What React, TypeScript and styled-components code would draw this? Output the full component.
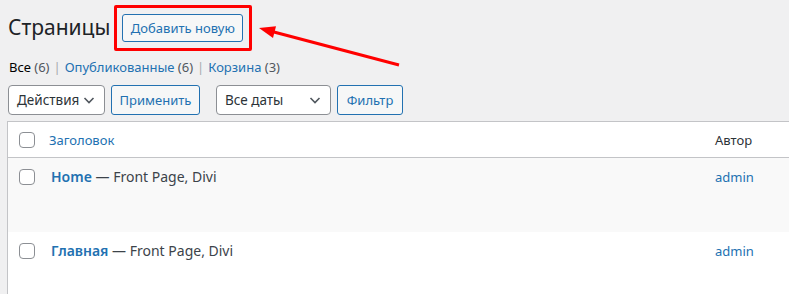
import React from "react";
import styled, { createGlobalStyle } from "styled-components";

const Global = createGlobalStyle`
  html, body { margin: 0; padding: 0; background: #f0f0f1; overflow: hidden; }
  body { font-family: "Noto Sans", "Open Sans", sans-serif; font-size: 13px; color: #1d2327; }
  * { box-sizing: border-box; }
`;

const Page = styled.div`
  position: relative;
  width: 789px;
  height: 294px;
  padding: 5px 0 0 7px;
  overflow: hidden;
`;

const Header = styled.div`
  display: flex;
  align-items: center;
  height: 46px;
`;

const Title = styled.h1`
  margin: 0 0 0 1px;
  font-size: 21px;
  font-weight: 400;
  color: #1d2327;
  line-height: 1.3;
`;

const Highlight = styled.div`
  margin-left: 4px;
  border: 3px solid #f00;
  border-radius: 2px;
  width: 138px;
  height: 46px;
  display: flex;
  align-items: center;
  justify-content: center;
`;

const AddButton = styled.a`
  display: inline-flex;
  align-items: center;
  justify-content: center;
  width: 121px;
  height: 28px;
  border: 1px solid #2271b1;
  border-radius: 3px;
  background: #f6f7f7;
  color: #2271b1;
  font-size: 13px;
  text-decoration: none;
  margin-right: 1px;
`;

const Arrow = styled.svg`
  position: absolute;
  left: 250px;
  top: 15px;
`;

const Filters = styled.ul`
  list-style: none;
  margin: 6px 0 0 2px;
  padding: 0;
  display: flex;
  color: #646970;
  font-size: 13px;
  line-height: 20px;
`;

const FilterItem = styled.li<{ $current?: boolean }>`
  a {
    color: ${(p) => (p.$current ? "#000" : "#2271b1")};
    text-decoration: none;
  }
  .count { color: #50575e; }
`;

const Sep = styled.span`
  margin: 0 4px;
  color: #a7aaad;
`;

const Toolbar = styled.div`
  display: flex;
  align-items: center;
  margin: 8px 0 0 1px;
  height: 30px;
`;

const Group = styled.div<{ $ml?: number }>`
  display: flex;
  gap: 6px;
  margin-left: ${(p) => p.$ml || 0}px;
`;

const Select = styled.div<{ $w: number }>`
  width: ${(p) => p.$w}px;
  height: 30px;
  border: 1px solid #8c8f94;
  border-radius: 4px;
  background: #fff;
  display: flex;
  align-items: center;
  justify-content: space-between;
  padding: 0 8px 0 8px;
  font-size: 13.5px;
  color: #2c3338;
`;

const Button = styled.div<{ $w: number }>`
  width: ${(p) => p.$w}px;
  height: 30px;
  border: 1px solid #2271b1;
  border-radius: 3px;
  background: #f6f7f7;
  color: #2271b1;
  display: flex;
  align-items: center;
  justify-content: center;
  font-size: 13px;
`;

const Table = styled.div`
  margin-top: 6px;
  width: 800px;
  border: 1px solid #c3c4c7;
  border-right: none;
  background: #fff;
`;

const HeadRow = styled.div`
  display: flex;
  align-items: center;
  height: 36px;
  border-bottom: 1px solid #c3c4c7;
`;

const Row = styled.div<{ $alt?: boolean }>`
  display: flex;
  align-items: flex-start;
  height: 74px;
  padding-top: 9px;
  background: ${(p) => (p.$alt ? "#f9f9f9" : "#fff")};
`;

const CheckCell = styled.div<{ $pt?: number }>`
  width: 41px;
  padding-left: 11px;
  padding-top: ${(p) => p.$pt || 0}px;
  display: flex;
`;

const Checkbox = styled.span`
  width: 16px;
  height: 16px;
  border: 1px solid #8c8f94;
  border-radius: 4px;
  background: #fff;
  display: inline-block;
`;

const TitleCell = styled.div<{ $pl: number }>`
  flex: 1;
  padding-left: ${(p) => p.$pl}px;
  font-size: 13px;
  color: #2271b1;
`;

const RowTitle = styled.div`
  font-size: 14px;
  color: #50575e;
  font-weight: 600;
  a { color: #2271b1; text-decoration: none; }
  span { font-weight: 400; color: #3c434a; }
`;

const AuthorCell = styled.div<{ $head?: boolean }>`
  width: 92px;
  font-size: 13px;
  padding-top: ${(p) => (p.$head ? 0 : 1)}px;
  color: ${(p) => (p.$head ? "#2c3338" : "#2271b1")};
`;

const Chevron = () => (
  <svg width="14" height="14" viewBox="0 0 14 14">
    <path d="M2.5 5 L7 9.5 L11.5 5" fill="none" stroke="#50575e" strokeWidth="1.6" />
  </svg>
);

export default function App() {
  return (
    <>
      <Global />
      <Page>
        <Header>
          <Title>Страницы</Title>
          <Highlight>
            <AddButton>Добавить новую</AddButton>
          </Highlight>
        </Header>
        <Arrow width="160" height="60" viewBox="0 0 160 60">
          <line x1="149" y1="50" x2="22" y2="16.5" stroke="#f00" strokeWidth="3" />
          <polygon points="9,13 26,11.3 23,23" fill="#f00" />
        </Arrow>
        <Filters>
          <FilterItem $current>
            <a>Все <span className="count">(6)</span></a>
          </FilterItem>
          <Sep>|</Sep>
          <FilterItem>
            <a>Опубликованные <span className="count">(6)</span></a>
          </FilterItem>
          <Sep>|</Sep>
          <FilterItem>
            <a>Корзина <span className="count">(3)</span></a>
          </FilterItem>
        </Filters>
        <Toolbar>
          <Group>
            <Select $w={97}>Действия <Chevron /></Select>
            <Button $w={89}>Применить</Button>
          </Group>
          <Group $ml={16}>
            <Select $w={115}>Все даты <Chevron /></Select>
            <Button $w={66}>Фильтр</Button>
          </Group>
        </Toolbar>
        <Table>
          <HeadRow>
            <CheckCell><Checkbox /></CheckCell>
            <TitleCell $pl={0}>Заголовок</TitleCell>
            <AuthorCell $head>Автор</AuthorCell>
          </HeadRow>
          <Row $alt>
            <CheckCell $pt={2}><Checkbox /></CheckCell>
            <TitleCell $pl={2}>
              <RowTitle><a>Home</a><span> — Front Page, Divi</span></RowTitle>
            </TitleCell>
            <AuthorCell>admin</AuthorCell>
          </Row>
          <Row>
            <CheckCell $pt={2}><Checkbox /></CheckCell>
            <TitleCell $pl={2}>
              <RowTitle><a>Главная</a><span> — Front Page, Divi</span></RowTitle>
            </TitleCell>
            <AuthorCell>admin</AuthorCell>
          </Row>
        </Table>
      </Page>
    </>
  );
}
